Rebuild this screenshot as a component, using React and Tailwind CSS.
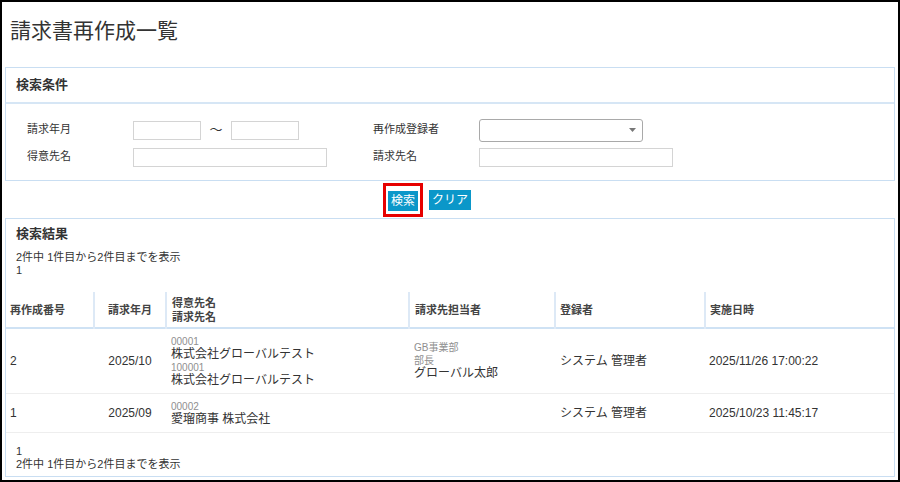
import React from 'react';

const font = { fontFamily: '"Liberation Sans", "Noto Sans CJK JP", sans-serif' };

function Field({ className = '' }) {
  return <div className={`h-[19px] border border-[#d4d4d4] bg-white ${className}`} />;
}

function SearchPanel() {
  return (
    <div className="border border-[#c9def2] bg-white">
      <div className="h-[36px] border-b-2 border-[#d6e6f5] pl-[10px] flex items-center">
        <span className="text-[13px] font-bold text-[#333]">検索条件</span>
      </div>
      <div className="pt-[14px] pb-[13px] text-[11px] text-[#333]">
        <div className="flex items-center h-[24px]">
          <div className="w-[127px] pl-[21px] -mt-[2px]">請求年月</div>
          <Field className="w-[68px]" />
          <div className="w-[30px] text-center text-[13px]">～</div>
          <Field className="w-[68px]" />
          <div className="w-[180px] pl-[74px] -mt-[2px] whitespace-nowrap">再作成登録者</div>
          <div className="w-[164px] h-[23px] border border-[#a9a9a9] rounded-[3px] bg-white flex items-center justify-end pr-[6px]">
            <svg width="7" height="4" viewBox="0 0 7 4"><path d="M0 0h7L3.5 4z" fill="#777" /></svg>
          </div>
        </div>
        <div className="flex items-center h-[20px] mt-[5px]">
          <div className="w-[127px] pl-[21px] -mt-[2px]">得意先名</div>
          <Field className="w-[194px]" />
          <div className="w-[152px] pl-[46px] -mt-[2px]">請求先名</div>
          <Field className="w-[194px]" />
        </div>
      </div>
    </div>
  );
}

const heads = [
  { w: 'w-[88px]', label: '再作成番号', cls: 'pl-[4px] text-left' },
  { w: 'w-[72px]', label: '請求年月', cls: 'text-center' },
  { w: 'w-[243px]', label: ['得意先名', '請求先名'], cls: 'pl-[5px] text-left' },
  { w: 'w-[146px]', label: '請求先担当者', cls: 'pl-[5px] text-left' },
  { w: 'w-[150px]', label: '登録者', cls: 'pl-[4px] text-left' },
  { w: '', label: '実施日時', cls: 'pl-[4px] text-left' },
];

function Sub({ children }) {
  return <div className="text-[10px] text-[#8f8f8f]">{children}</div>;
}

function ResultPanel() {
  return (
    <div className="border border-[#c9def2] bg-white text-[#333]">
      <div className="pl-[10px] pt-[5px] text-[13px] font-bold h-[25px]">検索結果</div>
      <div className="pl-[10px] pt-[7px] text-[11px] leading-[13px]">
        <div>2件中 1件目から2件目までを表示</div>
        <div>1</div>
      </div>
      <table className="w-full mt-[15px] border-collapse">
        <thead>
          <tr className="h-[36px] border-b-2 border-[#cfe2f4]">
            {heads.map((h, i) => (
              <th
                key={i}
                className={`${h.w} ${h.cls} p-0 font-bold text-[11px] leading-[14px] text-[#444] align-middle ${i > 0 ? 'border-l-2 border-[#dde9f6]' : ''}`}
              >
                {Array.isArray(h.label) ? h.label.map((l) => <div key={l}>{l}</div>) : h.label}
              </th>
            ))}
          </tr>
        </thead>
        <tbody className="text-[12px]">
          <tr className="h-[65px] border-b border-[#eeeeee]">
            <td className="pl-[4px]">2</td>
            <td className="text-center">2025/10</td>
            <td className="pl-[5px] leading-[13px]">
              <Sub>00001</Sub>
              <div>株式会社グローバルテスト</div>
              <Sub>100001</Sub>
              <div>株式会社グローバルテスト</div>
            </td>
            <td className="pl-[5px] leading-[13px]">
              <Sub>GB事業部</Sub>
              <Sub>部長</Sub>
              <div>グローバル太郎</div>
            </td>
            <td className="pl-[5px]">システム 管理者</td>
            <td className="pl-[4px]">2025/11/26 17:00:22</td>
          </tr>
          <tr className="h-[39px] border-b border-[#eeeeee]">
            <td className="pl-[4px]">1</td>
            <td className="text-center">2025/09</td>
            <td className="pl-[5px] leading-[13px]">
              <Sub>00002</Sub>
              <div>愛瑠商事 株式会社</div>
            </td>
            <td />
            <td className="pl-[5px]">システム 管理者</td>
            <td className="pl-[4px]">2025/10/23 11:45:17</td>
          </tr>
        </tbody>
      </table>
      <div className="pl-[10px] pt-[12px] pb-[5px] text-[11px] leading-[13px]">
        <div>1</div>
        <div>2件中 1件目から2件目までを表示</div>
      </div>
    </div>
  );
}

export default function App() {
  return (
    <div className="w-[900px] h-[482px] border-2 border-black bg-white overflow-hidden" style={font}>
      <div className="px-[3px]">
        <h1 className="h-[65px] pl-[5px] pt-[13px] text-[21px] text-[#333] font-normal">請求書再作成一覧</h1>
        <SearchPanel />
        <div className="h-[37px] flex items-center gap-[6px] pl-[378px]">
          <div className="border-[3px] border-[#e60000] p-[2px]">
            <button className="h-[20px] px-[3px] bg-[#0b97c9] text-white text-[12px] leading-[20px]">検索</button>
          </div>
          <button className="h-[20px] px-[3px] bg-[#0b97c9] text-white text-[12px] leading-[20px]">クリア</button>
        </div>
        <ResultPanel />
      </div>
    </div>
  );
}
